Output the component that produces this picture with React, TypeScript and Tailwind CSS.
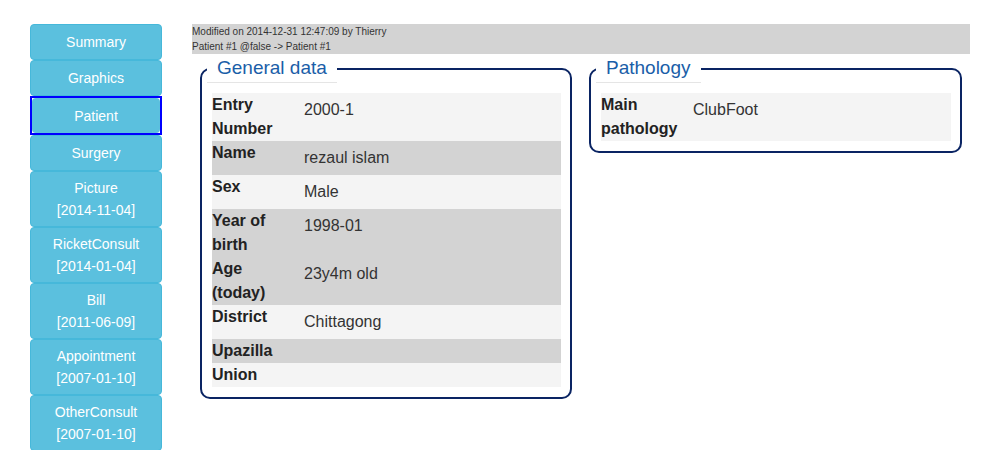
const menu = [
  { label: "Summary" },
  { label: "Graphics" },
  { label: "Patient", active: true },
  { label: "Surgery" },
  { label: "Picture", date: "2014-11-04" },
  { label: "RicketConsult", date: "2014-01-04" },
  { label: "Bill", date: "2011-06-09" },
  { label: "Appointment", date: "2007-01-10" },
  { label: "OtherConsult", date: "2007-01-10" },
];

const general = [
  { label: "Entry Number", value: "2000-1", light: true },
  { label: "Name", value: "rezaul islam" },
  { label: "Sex", value: "Male", light: true },
  { label: "Year of birth", value: "1998-01" },
  { label: "Age (today)", value: "23y4m old" },
  { label: "District", value: "Chittagong", light: true },
  { label: "Upazilla", value: "" },
  { label: "Union", value: "", light: true },
];

const pathology = [{ label: "Main pathology", value: "ClubFoot", light: true }];

type Row = { label: string; value: string; light?: boolean };

const MenuButton = ({ label, date }: { label: string; date?: string }) => (
  <div
    className={
      "flex flex-col items-center justify-center rounded-[4px] border border-[#46b8da] bg-[#5bc0de] text-[14px] leading-[22px] text-white " +
      (date ? "h-[56px]" : "h-[36px]")
    }
  >
    <span>{label}</span>
    {date && <span>[{date}]</span>}
  </div>
);

const DataTable = ({ rows }: { rows: Row[] }) => (
  <div className="flex flex-col">
    {rows.map((r) => (
      <div key={r.label} className={"flex " + (r.light ? "bg-[#f4f4f4]" : "bg-[#d3d3d3]")}>
        <div className="w-[86px] shrink-0 text-[16px] font-bold leading-[24px] text-[#222]">{r.label}</div>
        {r.value && <div className="py-[5px] pl-[6px] text-[16px] leading-[24px] text-[#333]">{r.value}</div>}
      </div>
    ))}
  </div>
);

const Panel = ({ title, rows }: { title: string; rows: Row[] }) => (
  <fieldset className="rounded-[10px] border-2 border-[#0a2463] pl-[5px] pr-[9px] pb-[10px] pt-[10px]">
    <legend className="border-b border-[#e5e5e5] px-[10px] text-[19px] leading-[28px] text-[#1a5ea8]">{title}</legend>
    <div className="pl-[5px]">
      <DataTable rows={rows} />
    </div>
  </fieldset>
);

export default function App() {
  return (
    <div className="flex w-[1000px] pt-[24px] pl-[30px] font-['Liberation_Sans',Arial,sans-serif]">
      <div className="flex w-[132px] shrink-0 flex-col">
        {menu.map((m) =>
          m.active ? (
            <div key={m.label} className="border-2 border-[#0000ff]">
              <div className="flex h-[35px] items-center justify-center rounded-[4px] bg-[#5bc0de] text-[14px] leading-[22px] text-white">
                {m.label}
              </div>
            </div>
          ) : (
            <MenuButton key={m.label} label={m.label} date={m.date} />
          )
        )}
      </div>
      <div className="ml-[30px] w-[778px]">
        <div className="bg-[#d3d3d3] text-[10px] leading-[15px] text-[#333]">
          <div>Modified on 2014-12-31 12:47:09 by Thierry</div>
          <div>Patient #1 @false -&gt; Patient #1</div>
        </div>
        <div className="grid grid-cols-2 items-start">
          <div className="pl-[8px] pr-[9px]">
            <Panel title="General data" rows={general} />
          </div>
          <div className="pl-[8px] pr-[8px]">
            <Panel title="Pathology" rows={pathology} />
          </div>
        </div>
      </div>
    </div>
  );
}
